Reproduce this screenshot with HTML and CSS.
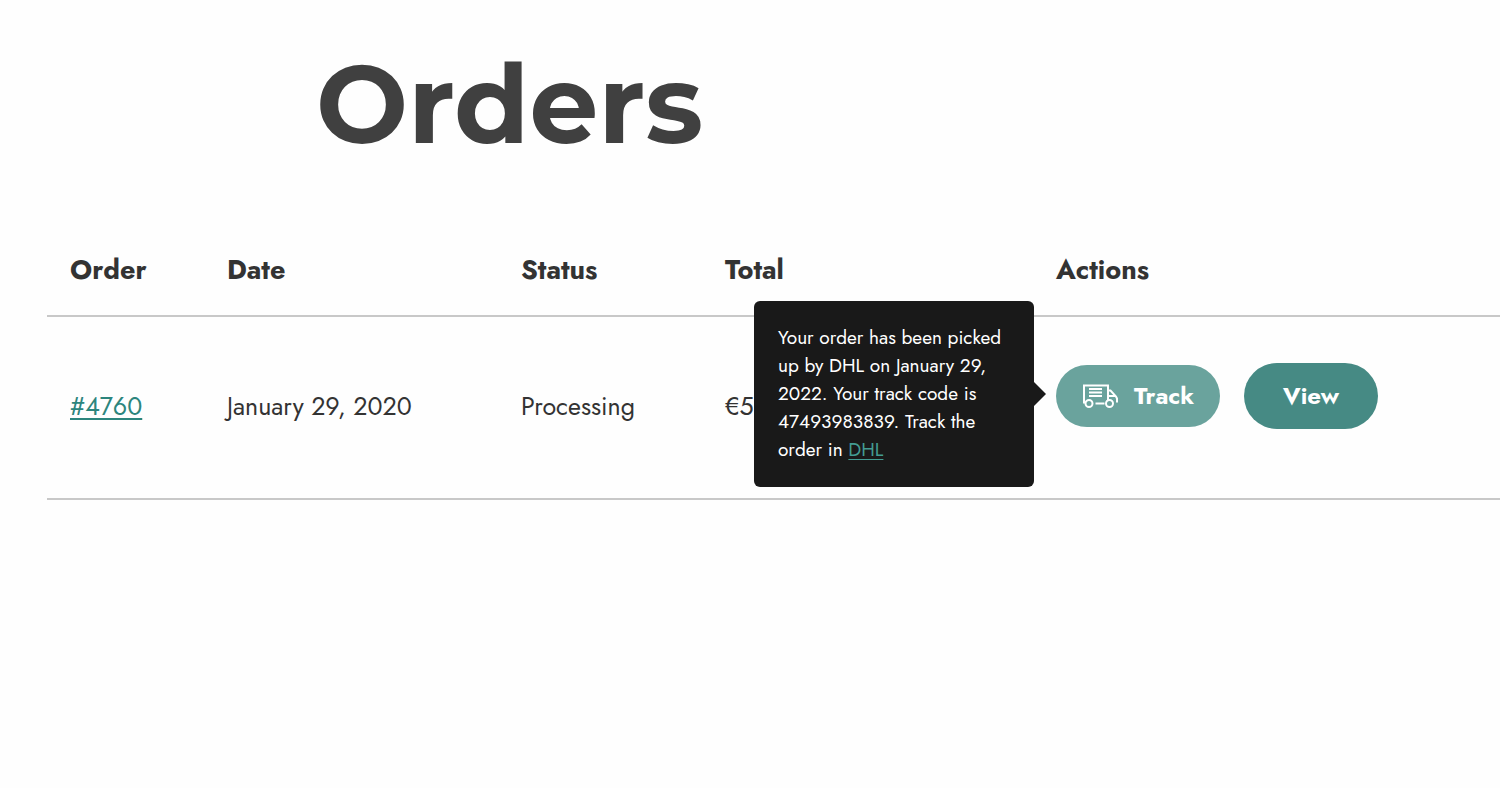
FILE: index.html
```html
<!DOCTYPE html>
<html lang="en">
<head>
    <meta charset="UTF-8">
    <meta name="viewport" content="width=device-width, initial-scale=1.0">
    <title>Orders</title>
    <link rel="stylesheet" href="styles.css">
</head>
<body>

    <main class="orders">
        <h1 class="page-title">Orders</h1>

        <table class="orders-table">
            <colgroup>
                <col class="col-order">
                <col class="col-date">
                <col class="col-status">
                <col class="col-total">
                <col>
            </colgroup>
            <thead>
                <tr>
                    <th scope="col">Order</th>
                    <th scope="col">Date</th>
                    <th scope="col">Status</th>
                    <th scope="col">Total</th>
                    <th scope="col">Actions</th>
                </tr>
            </thead>
            <tbody>
                <tr>
                    <td><a href="#4760">#4760</a></td>
                    <td>January 29, 2020</td>
                    <td>Processing</td>
                    <td>€5</td>
                    <td class="actions-cell">
                        <div class="actions">
                            <div class="track">
                                <button type="button" class="btn btn-track" aria-describedby="track-info">
                                    <svg class="truck" viewBox="0 0 36 24" aria-hidden="true">
                                        <path d="M3.5 18.5H2V1.5H26V16"/>
                                        <path d="M7 5H20M7 8.5H20M7 12H20"/>
                                        <path d="M13.5 19.5H22.5"/>
                                        <path d="M26 6.5H28.5L34 12.5L35 14.5V18.5M26 12H33.5"/>
                                        <circle cx="7" cy="19.5" r="3.5"/>
                                        <circle cx="27.5" cy="19.5" r="3.5"/>
                                    </svg>
                                    Track
                                </button>
                                <div class="tooltip" id="track-info" role="tooltip">Your order has been picked up by DHL on January 29, 2022. Your track code is 47493983839. Track the order in <a href="#dhl">DHL</a></div>
                            </div>
                            <button type="button" class="btn btn-view">View</button>
                        </div>
                    </td>
                </tr>
            </tbody>
        </table>
    </main>

</body>
</html>
```

FILE: styles.css
```css
* {
    margin: 0;
    padding: 0;
    box-sizing: border-box;
}
body {
    font-family: 'Jost', 'Lato', sans-serif;
    font-size: 25px;
    line-height: 36px;
    color: #333;
    background: #fefefe;
}
.orders {
    padding: 40px 0 0 47px;
}
.page-title {
    margin-left: 269px;
    font-family: 'Montserrat', 'Lato', sans-serif;
    font-size: 109px;
    font-weight: 700;
    line-height: 128px;
    color: #404040;
}
.orders-table {
    width: 100%;
    margin-top: 55px;
    table-layout: fixed;
    border-collapse: collapse;
}
.col-order {
    width: 157px;
}
.col-date {
    width: 294px;
}
.col-status {
    width: 204px;
}
.col-total {
    width: 331px;
}
.orders-table th,
.orders-table td {
    padding: 0 23px;
    text-align: left;
    border-bottom: 2px solid #c8c8c8;
}
.orders-table th {
    padding-top: 29px;
    padding-bottom: 27px;
    font-size: 27px;
    font-weight: 700;
}
.orders-table td {
    height: 183px;
    padding-bottom: 4px;
}
.orders-table td a {
    color: #2c857d;
    text-decoration-thickness: 2px;
    text-underline-offset: 3px;
}
.orders-table .actions-cell {
    padding-bottom: 24px;
}
.actions {
    display: flex;
    align-items: center;
    gap: 24px;
}
.track {
    position: relative;
}
.btn {
    display: flex;
    align-items: center;
    justify-content: center;
    border: none;
    border-radius: 33px;
    color: #fff;
    font-family: inherit;
    font-size: 24px;
    font-weight: 700;
    line-height: 36px;
    cursor: pointer;
}
.btn-track {
    gap: 16px;
    padding: 13px 26px;
    background: #6aa39d;
}
.btn-view {
    padding: 15px 39px;
    background: #468a84;
}
.truck {
    width: 36px;
    height: 24px;
    fill: none;
    stroke: #fff;
    stroke-width: 2;
}
.tooltip {
    position: absolute;
    top: -64px;
    right: calc(100% + 22px);
    z-index: 1;
    width: 280px;
    padding: 23px 24px;
    border-radius: 6px;
    background: #191919;
    color: #fff;
    font-size: 19px;
    line-height: 28px;
}
.tooltip::after {
    content: "";
    position: absolute;
    top: 50%;
    left: 100%;
    border: 12px solid transparent;
    border-left-color: #191919;
    border-right: none;
    transform: translateY(-50%);
}
.orders-table .tooltip a {
    color: #439c92;
    text-decoration-thickness: 1px;
}
```
